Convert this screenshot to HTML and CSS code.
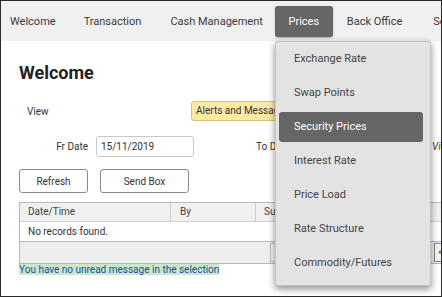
FILE: index.html
```html
<!DOCTYPE html>
<html lang="en">
<head>
  <meta charset="UTF-8" />
  <title>Welcome</title>
  <link rel="stylesheet" href="styles.css">
</head>
<body>
  <div class="frame">
    <!-- Top menu bar -->
    <div class="nav">
      <span class="nav-item nav-welcome">Welcome</span>
      <span class="nav-item nav-transaction">Transaction</span>
      <span class="nav-item nav-cash">Cash Management</span>
      <span class="nav-item nav-prices active">Prices</span>
      <span class="nav-item nav-back">Back Office</span>
      <span class="nav-item nav-more">Setup</span>
    </div>

    <div class="content">
      <h1>Welcome</h1>

      <div class="row row-view">
        <span class="label-view">View</span>
        <span class="view-select">Alerts and Messages</span>
      </div>

      <div class="row row-date">
        <span class="label-date">Fr Date</span>
        <span class="date-input">15/11/2019</span>
        <span class="label-to">To Date</span>
        <span class="label-vi">View</span>
      </div>

      <div class="row row-buttons">
        <button class="btn btn-refresh">Refresh</button>
        <button class="btn btn-send">Send Box</button>
      </div>

      <div class="grid">
        <div class="grid-head">
          <div class="cell cell-date">Date/Time</div>
          <div class="cell cell-by">By</div>
          <div class="cell cell-sub">Subject</div>
        </div>
        <div class="grid-row">No records found.</div>
        <div class="grid-foot">
          <span class="pager"></span>
          <span class="pager-btn">«</span>
        </div>
      </div>

      <div class="note"><span>You have no unread message in the selection</span></div>
    </div>

    <!-- Open "Prices" dropdown -->
    <ul class="dropdown">
      <li>Exchange Rate</li>
      <li>Swap Points</li>
      <li class="selected">Security Prices</li>
      <li>Interest Rate</li>
      <li>Price Load</li>
      <li>Rate Structure</li>
      <li>Commodity/Futures</li>
    </ul>
  </div>
</body>
</html>
```

FILE: styles.css
```css
/* ==============================================
   PAGE FRAME
   ============================================== */
body {
  margin: 0;
  padding: 0;
  font-family: Roboto, "Liberation Sans", sans-serif;
  color: #333;
  background: #fff;
}

.frame {
  position: relative;
  width: 442px;
  height: 297px;
  box-sizing: border-box;
  border: 1px solid #2a2a2a;
  overflow: hidden;
  background: #fff;
}

/* ==============================================
   MENU BAR
   ============================================== */
.nav {
  display: flex;
  align-items: center;
  height: 40px;
  background: #f0f0f0;
  padding-left: 9px;
  white-space: nowrap;
  font-size: 11px;
}

.nav-item {
  display: inline-block;
  flex-shrink: 0;
  color: #3a3a3a;
}
.nav-transaction { margin-left: 28px; }
.nav-cash { margin-left: 29px; }
.nav-prices { margin-left: 12px; }
.nav-back { margin-left: 14px; }
.nav-more { margin-left: 31px; }

.nav-item.active {
  background: #666;
  color: #fff;
  width: 58px;
  text-align: center;
  height: 31px;
  line-height: 31px;
  border-radius: 3px;
  box-shadow: 0 1px 2px rgba(0, 0, 0, 0.3);
}

/* ==============================================
   MAIN CONTENT
   ============================================== */
.content {
  padding: 0 18px;
}

h1 {
  margin: 21px 0 0;
  font-size: 18px;
  font-weight: bold;
  color: #222;
  height: 22px;
  line-height: 22px;
}

.row {
  display: flex;
  align-items: center;
  font-size: 10px;
  white-space: nowrap;
}
.row > * {
  flex-shrink: 0;
}

.row-view {
  margin-top: 17px;
  height: 20px;
}
.label-view {
  margin-left: 8px;
  width: 164px;
}
.view-select {
  display: inline-block;
  background: #fbe9a4;
  border: 1px solid #d8c27a;
  border-radius: 3px;
  height: 18px;
  line-height: 18px;
  padding: 0 4px;
  width: 120px;
}

.row-date {
  margin-top: 14px;
  height: 22px;
}
.label-date {
  width: 69px;
  text-align: right;
  color: #333;
}
.date-input {
  display: inline-block;
  margin-left: 8px;
  width: 98px;
  height: 21px;
  line-height: 20px;
  padding-left: 4px;
  box-sizing: border-box;
  border: 1px solid #c8c8c8;
  border-radius: 3px;
}
.label-to {
  margin-left: 62px;
  width: 176px;
}
.label-vi {
  font-style: italic;
}

.row-buttons {
  margin-top: 12px;
  gap: 12px;
}
.btn {
  height: 24px;
  background: #fff;
  border: 1px solid #8a8a8a;
  border-radius: 3px;
  font-family: inherit;
  font-size: 10px;
  color: #333;
  padding: 0;
}
.btn-refresh { width: 69px; }
.btn-send { width: 89px; }

/* ==============================================
   MESSAGE GRID
   ============================================== */
.grid {
  margin-top: 9px;
  width: 440px;
  border: 1px solid #b8b8b8;
  font-size: 10px;
}
.grid-head {
  display: flex;
  height: 18px;
  background: #f0f0f0;
  border-bottom: 1px solid #cfcfcf;
}
.cell {
  line-height: 18px;
  padding-left: 8px;
  box-sizing: border-box;
  color: #444;
}
.cell-date {
  width: 151px;
  border-right: 1px solid #cfcfcf;
}
.cell-by {
  width: 85px;
  padding-left: 9px;
  border-right: 1px solid #cfcfcf;
}
.grid-row {
  height: 19px;
  line-height: 19px;
  padding-left: 8px;
  border-bottom: 1px solid #b8b8b8;
}
.grid-foot {
  display: flex;
  align-items: center;
  height: 21px;
  background: #eeeeee;
}
.pager {
  margin-left: 250px;
  width: 155px;
  height: 17px;
  border: 1px solid #c4c4c4;
  background: #f4f4f4;
}
.pager-btn {
  margin-left: 7px;
  width: 10px;
  height: 17px;
  line-height: 17px;
  border: 1px solid #888;
  background: #f4f4f4;
  font-size: 9px;
  text-align: center;
}

.note {
  font-size: 10px;
  height: 12px;
  line-height: 12px;
}
.note span {
  background: #c9e8c9;
  color: #1a4ca8;
}

/* ==============================================
   PRICES DROPDOWN
   ============================================== */
.dropdown {
  position: absolute;
  top: 40px;
  left: 274px;
  width: 156px;
  height: 245px;
  margin: 0;
  padding: 0 7px 0 3px;
  box-sizing: border-box;
  list-style: none;
  background: #e3e3e3;
  border: 1px solid #c4c4c4;
  border-radius: 2px;
  box-shadow: 0 3px 7px rgba(0, 0, 0, 0.45);
  font-size: 11px;
}
.dropdown li {
  height: 34px;
  line-height: 34px;
  padding-left: 15px;
  color: #444;
}
.dropdown li.selected {
  height: 30px;
  line-height: 30px;
  margin: 2px 0;
  background: #666;
  color: #fff;
  border-radius: 3px;
}
```
